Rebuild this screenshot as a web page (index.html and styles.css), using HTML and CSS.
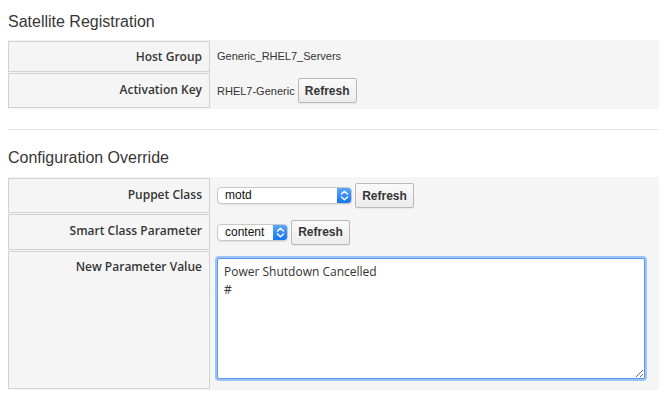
FILE: index.html
```html
<!DOCTYPE html>
<html>
<head>
<meta charset="utf-8">
<link rel="stylesheet" href="styles.css">
</head>
<body>
<h2 class="title first">Satellite Registration</h2>
<div class="form">
  <div class="label">Host Group</div>
  <div class="value v1">Generic_RHEL7_Servers</div>
  <div class="label up">Activation Key</div>
  <div class="value v2">RHEL7-Generic <button class="btn">Refresh</button></div>
</div>
<hr class="sep">
<h2 class="title second">Configuration Override</h2>
<div class="form">
  <div class="label up">Puppet Class</div>
  <div class="value v2">
    <div class="select wide"><span class="sel-text">motd</span><span class="stepper"><svg width="9" height="11" viewBox="0 0 9 11"><path d="M1.5 4 L4.5 1.2 L7.5 4 M1.5 7 L4.5 9.8 L7.5 7" fill="none" stroke="#fff" stroke-width="1.4" stroke-linecap="round" stroke-linejoin="round"/></svg></span></div>
    <button class="btn">Refresh</button>
  </div>
  <div class="label up">Smart Class Parameter</div>
  <div class="value v3">
    <div class="select narrow"><span class="sel-text">content</span><span class="stepper"><svg width="9" height="11" viewBox="0 0 9 11"><path d="M1.5 4 L4.5 1.2 L7.5 4 M1.5 7 L4.5 9.8 L7.5 7" fill="none" stroke="#fff" stroke-width="1.4" stroke-linecap="round" stroke-linejoin="round"/></svg></span></div>
    <button class="btn">Refresh</button>
  </div>
  <div class="label top">New Parameter Value</div>
  <div class="value v4">
    <textarea class="area">Power Shutdown Cancelled
#</textarea>
  </div>
</div>
</body>
</html>
```
FILE: styles.css
```css
html, body {
  margin: 0;
  padding: 0;
  background: #fff;
}
body {
  font-family: "Liberation Sans", Arial, sans-serif;
  color: #333;
}
.title {
  font-family: "Liberation Sans", Arial, sans-serif;
  font-weight: normal;
  font-size: 16px;
  line-height: 20px;
  color: #363636;
  margin: 0 8px;
}
.title.first {
  padding-top: 12px;
  margin-bottom: 8px;
}
.title.second {
  margin-top: 18px;
  margin-bottom: 9px;
}
.sep {
  border: 0;
  border-top: 1px solid #e6e6e6;
  margin: 20px 8px 0 8px;
  width: 651px;
  height: 0;
}
.form {
  margin: 0 8px;
  width: 651px;
  background: #f5f5f5;
  display: grid;
  grid-template-columns: 202px 1fr;
  row-gap: 1px;
  padding: 1px 0;
}
.label {
  border: 1px solid #d2d2d2;
  text-align: right;
  padding: 0 7px 0 7px;
  font-family: "Open Sans", sans-serif;
  font-weight: 600;
  font-size: 12px;
  line-height: 17px;
  color: #363636;
  display: flex;
  align-items: center;
  justify-content: flex-end;
}
.label.up {
  padding-bottom: 3px;
}
.label.top {
  align-items: flex-start;
  padding-top: 6px;
}
.value {
  padding-left: 7px;
  font-size: 11px;
  display: flex;
  align-items: center;
  color: #333;
}
.v1 {
  height: 31px;
  padding-bottom: 1px;
  box-sizing: border-box;
}
.v2 {
  height: 35px;
  gap: 3px;
}
.v3 {
  height: 36px;
  gap: 3px;
}
.v4 {
  align-items: flex-start;
  padding-top: 7px;
  padding-bottom: 10px;
}
.btn {
  font-family: "Liberation Sans", Arial, sans-serif;
  font-weight: bold;
  font-size: 12px;
  color: #363636;
  height: 25px;
  width: 59px;
  padding: 0;
  margin: 0;
  border: 1px solid #b9b9b9;
  border-radius: 2px;
  background: linear-gradient(#fafafa, #ececec);
  box-shadow: 0 1px 0 rgba(0,0,0,0.05);
}
.select {
  display: inline-flex;
  height: 17px;
  box-sizing: border-box;
  border: 1px solid #c9c9c9;
  border-radius: 4px;
  background: #fff;
  box-shadow: 0 1px 1px rgba(0,0,0,0.08);
  align-items: stretch;
  overflow: hidden;
}
.select.wide {
  width: 135px;
}
.select.narrow {
  width: 71px;
}
.sel-text {
  flex: 1;
  padding-left: 7px;
  font-family: "Liberation Sans", Arial, sans-serif;
  font-size: 12px;
  line-height: 15px;
  color: #111;
}
.stepper {
  width: 15px;
  background: linear-gradient(#5fa9fb, #1172f0);
  display: flex;
  align-items: center;
  justify-content: center;
  margin: -1px -1px -1px 0;
  border-radius: 0 4px 4px 0;
}
.area {
  width: 428px;
  height: 121px;
  box-sizing: border-box;
  margin: 0;
  padding: 4px 6px;
  border: 1px solid #5b97ec;
  border-radius: 2px;
  box-shadow: 0 0 0 2px #9cc2f6;
  outline: none;
  font-family: "Open Sans", sans-serif;
  font-size: 12px;
  line-height: 18px;
  color: #333;
  background: #fff;
  resize: both;
}
```
